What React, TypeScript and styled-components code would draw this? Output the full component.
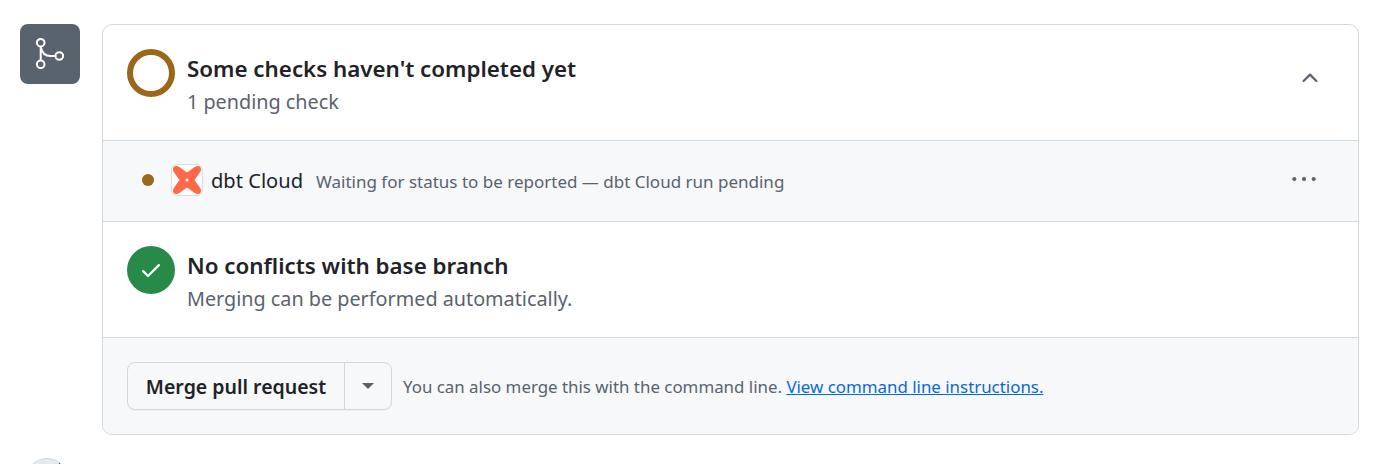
import React from "react";
import styled, { createGlobalStyle } from "styled-components";

const GlobalStyle = createGlobalStyle`
  html, body {
    margin: 0;
    padding: 0;
    height: 464px;
    overflow: hidden;
    background: #fff;
    color: #1f2328;
    font-family: "Noto Sans", "Open Sans", Arial, sans-serif;
  }
`;

const Page = styled.div`
  height: 464px;
  box-sizing: border-box;
  overflow: hidden;
  padding: 24px 30px 0 20px;
`;

const Timeline = styled.div`
  display: flex;
  gap: 22px;
  align-items: flex-start;
`;

const MergeTile = styled.div`
  flex: none;
  width: 60px;
  height: 60px;
  border-radius: 8px;
  background: #59636e;
  display: grid;
  place-items: center;
`;

const Card = styled.div`
  flex: 1;
  border: 1px solid #d1d9e0;
  border-radius: 10px;
  overflow: hidden;
  background: #fff;
`;

const StatusSection = styled.section`
  height: 115px;
  padding: 24px 36px 0 24px;
  display: flex;
  align-items: flex-start;
  gap: 12px;
  box-sizing: border-box;
`;

const Ring = styled.div`
  flex: none;
  width: 48px;
  height: 48px;
  box-sizing: border-box;
  border-radius: 50%;
  border: 6px solid #9a681c;
`;

const SuccessBadge = styled.div`
  flex: none;
  width: 48px;
  height: 48px;
  border-radius: 50%;
  background: #288a48;
  display: grid;
  place-items: center;
  color: #fff;
`;

const StatusText = styled.div`
  flex: 1;
  display: flex;
  flex-direction: column;
  padding-top: 3px;
`;

const Title = styled.div`
  font-size: 22.34px;
  line-height: 33px;
  font-weight: 600;
  color: #1f2328;
`;

const Subtitle = styled.div`
  font-size: 19.8px;
  line-height: 29px;
  margin-top: 2px;
  color: #59636e;
`;

const IconSlot = styled.div<{ $lift?: number }>`
  flex: none;
  color: #59636e;
  display: flex;
  margin-top: ${(p) => p.$lift ?? 0}px;
`;

const CheckRow = styled.div`
  height: 82px;
  box-sizing: border-box;
  border-top: 1px solid #d1d9e0;
  border-bottom: 1px solid #d1d9e0;
  background: #f6f8fa;
  display: flex;
  align-items: center;
  padding: 0 40px 2px 39px;
`;

const Dot = styled.span`
  flex: none;
  width: 12px;
  height: 12px;
  border-radius: 50%;
  background: #9a681c;
  margin-right: 17px;
`;

const LogoTile = styled.span`
  flex: none;
  width: 32px;
  height: 32px;
  box-sizing: border-box;
  border: 1px solid #d8dee4;
  border-radius: 6px;
  background: #fff;
  display: grid;
  place-items: center;
  margin-right: 8px;
`;

const CheckName = styled.span`
  font-size: 20.1px;
  color: #1f2328;
  margin-right: 13px;
`;

const CheckDetail = styled.span`
  flex: 1;
  font-size: 17px;
  color: #59636e;
  padding-top: 2px;
`;

const Footer = styled.div`
  height: 97px;
  box-sizing: border-box;
  border-top: 1px solid #d1d9e0;
  background: #f6f8fa;
  display: flex;
  align-items: center;
  padding: 0 24px;
`;

const ButtonGroup = styled.div`
  display: flex;
  height: 48px;
  box-sizing: border-box;
  border: 1px solid #d1d9e0;
  border-radius: 8px;
  background: #f6f8fa;
  box-shadow: 0 1px 0 rgba(31, 35, 40, 0.04);
  margin-right: 11px;
`;

const MergeButton = styled.button`
  width: 216px;
  border: 0;
  background: none;
  padding: 0;
  font: 600 19.5px "Noto Sans", Arial, sans-serif;
  color: #1f2328;
`;

const CaretButton = styled.button`
  width: 47px;
  border: 0;
  border-left: 1px solid #d1d9e0;
  background: none;
  padding: 0;
  display: grid;
  place-items: center;
`;

const Caret = styled.span`
  width: 0;
  height: 0;
  border-left: 6px solid transparent;
  border-right: 6px solid transparent;
  border-top: 6px solid #59636e;
`;

const Hint = styled.span`
  font-size: 16.89px;
  color: #59636e;
`;

const HintLink = styled.a`
  color: #0969da;
  text-decoration: underline;
`;

const NextAvatar = styled.div`
  position: relative;
  overflow: hidden;
  width: 44px;
  height: 44px;
  margin: 23px 0 0 5px;
  border-radius: 50%;
  background: #e4eaee;
  border: 1px solid #d1d9e0;
  box-sizing: border-box;
`;

const AvatarMark = styled.span`
  position: absolute;
  left: 33px;
  top: 3px;
  width: 2px;
  height: 10px;
  background: #3a3f45;
`;

export default function App() {
  return (
    <Page>
      <GlobalStyle />
      <Timeline>
        <MergeTile>
          <svg width="32" height="36" viewBox="0 0 32 36" fill="none" stroke="#fff" strokeWidth="2">
            <circle cx="6.700" cy="6.700" r="3.800" />
            <circle cx="6.700" cy="28.300" r="3.800" />
            <circle cx="25.300" cy="20" r="3.800" />
            <path d="M6.700 10.500v14M6.700 10.500c1 6 4.500 9.500 10 9.500h4.800" />
          </svg>
        </MergeTile>
        <Card>
          <StatusSection>
            <Ring />
            <StatusText>
              <Title>Some checks haven't completed yet</Title>
              <Subtitle>1 pending check</Subtitle>
            </StatusText>
            <IconSlot $lift={17}>
              <svg width="24" height="24" viewBox="0 0 16 16" fill="currentColor">
                <path d="M3.220 10.530a.749.749 0 0 1 0-1.060l4.250-4.250a.749.749 0 0 1 1.060 0l4.250 4.250a.749.749 0 1 1-1.060 1.060L8 6.810 4.280 10.530a.749.749 0 0 1-1.060 0Z" />
              </svg>
            </IconSlot>
          </StatusSection>
          <CheckRow>
            <Dot />
            <LogoTile>
              <svg width="30" height="30" viewBox="0 0 30 30">
                <path
                  fill="#ff694a"
                  d="M4 1Q5.500.8 7 1.800L15 7.500 23 1.800Q24.500.8 26 1 28.800 1.200 29 4 29.200 5.500 28.200 7L22.500 15 28.200 23Q29.200 24.500 29 26 28.800 28.800 26 29 24.500 29.200 23 28.200L15 22.500 7 28.200Q5.500 29.200 4 29 1.200 28.800 1 26 .8 24.500 1.800 23L7.500 15 1.800 7Q.8 5.500 1 4 1.200 1.200 4 1Z"
                />
                <circle cx="15" cy="15" r="1.500" fill="#fff" />
              </svg>
            </LogoTile>
            <CheckName>dbt Cloud</CheckName>
            <CheckDetail>Waiting for status to be reported — dbt Cloud run pending</CheckDetail>
            <IconSlot $lift={-2}>
              <svg width="28" height="20" viewBox="0 0 28 20" fill="currentColor">
                <circle cx="4.300" cy="10" r="2.100" />
                <circle cx="14" cy="10" r="2.100" />
                <circle cx="23.700" cy="10" r="2.100" />
              </svg>
            </IconSlot>
          </CheckRow>
          <StatusSection>
            <SuccessBadge>
              <svg width="24" height="24" viewBox="0 0 16 16" fill="currentColor">
                <path d="M13.780 4.220a.75.75 0 0 1 0 1.060l-7.250 7.250a.75.75 0 0 1-1.060 0L2.220 9.280a.751.751 0 0 1 .018-1.042.751.751 0 0 1 1.042-.018L6 10.940l6.720-6.720a.75.75 0 0 1 1.060 0Z" />
              </svg>
            </SuccessBadge>
            <StatusText>
              <Title>No conflicts with base branch</Title>
              <Subtitle>Merging can be performed automatically.</Subtitle>
            </StatusText>
          </StatusSection>
          <Footer>
            <ButtonGroup>
              <MergeButton>Merge pull request</MergeButton>
              <CaretButton>
                <Caret />
              </CaretButton>
            </ButtonGroup>
            <Hint>
              You can also merge this with the command line.{" "}
              <HintLink href="#">View command line instructions.</HintLink>
            </Hint>
          </Footer>
        </Card>
      </Timeline>
      <NextAvatar>
        <AvatarMark />
      </NextAvatar>
    </Page>
  );
}
